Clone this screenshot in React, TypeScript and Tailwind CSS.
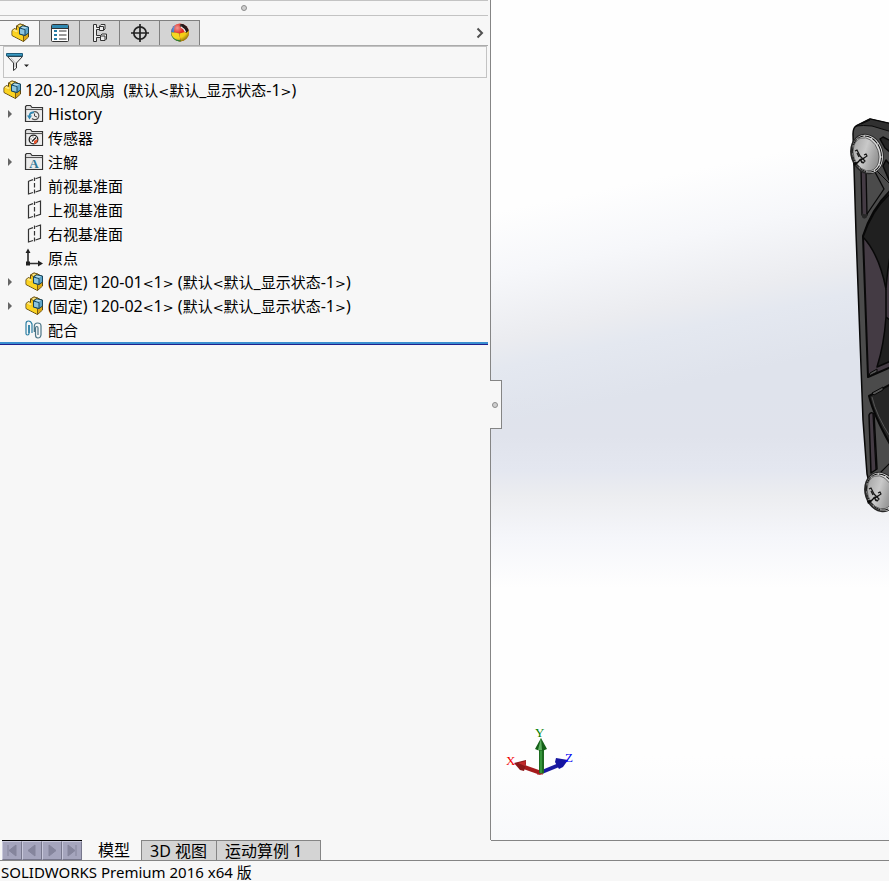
import { Fragment, type ReactNode } from "react";

const RUNS = /([\u3000-\u9fff]+|[<>])/;
const CJK = /[\u3000-\u9fff]/;

/** Sets Latin runs one pixel larger than the Chinese ones, with wide angle brackets. */
function TreeText({ children }: { children: string }) {
  return (
    <span className="whitespace-pre text-[16px]">
      {children.split(RUNS).map((part, i) => {
        if (CJK.test(part)) {
          return <span key={i} className="text-[15px]">{part}</span>;
        }
        if (part === "<" || part === ">") {
          return <span key={i} className="font-['DejaVu_Sans',sans-serif] text-[13px]">{part}</span>;
        }
        return <Fragment key={i}>{part}</Fragment>;
      })}
    </span>
  );
}

function Svg({ w = 20, h = 20, children }: { w?: number; h?: number; children: ReactNode }) {
  return (
    <svg width={w} height={h} viewBox={`0 0 ${w} ${h}`} fill="none" className="block shrink-0" aria-hidden="true">
      {children}
    </svg>
  );
}

function PartIcon() {
  return (
    <Svg>
      <path d="M2 7.500 4.500 5.500 6.500 6.500V3L10 1 13.500 2 18.500 4.500V14L13.500 18.500 2 12.500Z" fill="#f5c518" stroke="#5c460e" strokeLinejoin="round" />
      <path d="M6.500 3 10 1 13.500 2 9.500 4.500Z" fill="#fce680" stroke="#6b500f" strokeWidth=".8" />
      <path d="M2.500 7.500 4.500 6 8 8 6.500 9.500Z" fill="#fce680" />
      <path d="m2.500 8 11 5.500V18L2.500 12.200Z" fill="#fbd423" />
      <path d="M13.500 13.500V18L18 14V10Z" fill="#dca716" />
      <path d="M13.500 13V18.500" stroke="#7a5d12" />
      <path d="M9.500 5 12.500 3 18.500 4V10L15 12.500 9.500 11Z" fill="#5fa6ca" stroke="#16455e" strokeLinejoin="round" />
      <path d="M9.500 5 15 6.500V12.500L9.500 11Z" fill="#8cc5df" stroke="#16455e" strokeLinejoin="round" />
      <path d="m10.800 4.800 2-1.200 4.400.700-2.200 1.400Z" fill="#b5dcec" />
    </Svg>
  );
}

function PropertyIcon() {
  return (
    <Svg>
      <rect x="1.500" y="1.500" width="17" height="17" rx="1" fill="#fff" stroke="#333" />
      <path d="M2 2h16v3H2z" fill="#2f88b0" />
      <path d="M2 5.500h16" stroke="#333" />
      <path d="M4 7h3v2H4zm0 4h3v2H4zm0 4h3v2H4z" fill="#257ca6" />
      <path d="M9 8h7.500M9 12h7.500M9 16h7.500" stroke="#333" />
    </Svg>
  );
}

function ConfigIcon() {
  return (
    <Svg>
      <path d="M3.500 1.500h3v3h4v2h-4v6h4v2h-4v4h-3Z" fill="#efefef" stroke="#333" />
      <path d="m9.500 3 1.500-1.500h4V6l-1.500 1.500h-4Z" fill="#eee" stroke="#333" />
      <path d="M9.500 3.500h4v4" stroke="#333" />
      <path d="m10.500 12.500 1.500-1.500h4.500V16L15 17.500h-4.500Z" fill="#eee" stroke="#333" />
      <path d="M10.500 13h4.500v4" stroke="#333" />
    </Svg>
  );
}

function TargetIcon() {
  return (
    <Svg>
      <circle cx="10" cy="10" r="6.200" stroke="#222" strokeWidth="1.700" />
      <path d="M10 1v18M1 10h18" stroke="#222" strokeWidth="1.700" />
    </Svg>
  );
}

function AppearanceIcon() {
  return (
    <Svg>
      <defs>
        <clipPath id="ball"><circle cx="10" cy="9.500" r="9" /></clipPath>
        <radialGradient id="shine" cx=".35" cy=".25" r=".8">
          <stop offset="0" stopColor="#fff" stopOpacity=".5" />
          <stop offset=".4" stopColor="#fff" stopOpacity="0" />
          <stop offset=".7" stopColor="#000" stopOpacity="0" />
          <stop offset="1" stopColor="#000" stopOpacity=".45" />
        </radialGradient>
      </defs>
      <g clipPath="url(#ball)">
        <path d="M0 0h20v20H0z" fill="#e22e26" />
        <path d="M0 0h5.500Q4 5 4 9.500H0z" fill="#3c78c8" />
        <path d="M0 9.500q5-.500 9 1l2 10H0z" fill="#35a04a" />
        <path d="M1 9.500q4-.500 8 1l2 9q-8-2-10-10Z" fill="#f6d723" />
        <path d="M1 12q4 6 10 5v3H0Z" fill="#35a04a" />
        <path d="M9.500 10.500Q15 10 19 7v13h-8z" fill="#f4cd16" />
        <path d="M10.500 1h6l3 6-3.500 3q-2.500-5-6.500-7Z" fill="#241a1a" />
        <path d="M11 4q3 1.500 4.500 5" stroke="#f3eaea" strokeWidth="1.300" />
      </g>
      <circle cx="10" cy="9.500" r="9" fill="url(#shine)" />
    </Svg>
  );
}

function FilterIcon() {
  return (
    <svg width="24" height="20" viewBox="0 0 24 20" fill="none" aria-hidden="true">
      <path d="M1.500 4.500 7.500 11v7.500l3-2.500v-5l6-6.500Z" fill="#eee" stroke="#333" />
      <path d="m5 6 4 4.500V15" stroke="#bbb" />
      <path d="M.500 1.500h16v2.500H.500Z" fill="#3a9bc4" stroke="#205d7b" />
      <path d="M18 12.500h5L20.500 15Z" fill="#222" />
    </svg>
  );
}

function Folder({ children }: { children: ReactNode }) {
  return (
    <Svg>
      <path d="M1.500 17.500v-15l1-1h4l1.500 2h10.500v14Z" fill="#dedede" stroke="#333" strokeWidth="1.200" />
      <path d="M2 5.500h16.500" stroke="#555" />
      <path d="M3 6.500h15v10H3Z" fill="#ececec" />
      {children}
    </Svg>
  );
}

function HistoryIcon() {
  return (
    <Folder>
      <path d="M7.500 9.500A4 4 0 1 1 8 14.500" stroke="#555" strokeWidth="1.200" />
      <path d="M10.500 9.500V12l2.500 1" stroke="#444" />
      <path d="M10 8.500Q6 8 5.500 12" stroke="#3087b2" strokeWidth="1.800" />
      <path d="M3 11.500h5l-2.500 4Z" fill="#3087b2" />
    </Folder>
  );
}

function SensorIcon() {
  return (
    <Folder>
      <circle cx="9.500" cy="11.500" r="4.300" fill="#fff" stroke="#222" strokeWidth="1.300" />
      <path d="m10 13 3.500-2A4 4 0 0 1 10 16Z" fill="#e8542c" />
      <path d="m8 13.500 4-4" stroke="#222" strokeWidth="1.500" />
      <path d="M6.500 11h1M9 8.500v1" stroke="#222" />
    </Folder>
  );
}

function AnnotationIcon() {
  return (
    <Folder>
      <text x="10" y="16" textAnchor="middle" className="fill-[#2f7797] font-['Liberation_Serif',serif] text-[13px] font-bold">A</text>
    </Folder>
  );
}

function PlaneIcon() {
  return (
    <Svg>
      <path d="M4.500 5v13L9 16.500M4.500 5.200 9 3.600M11.500 2.700l5-1.700V14.300L11.500 16" stroke="#333" strokeWidth="1.200" />
      <path d="M10.500 1.500V5m0 2v4.500m0 2V17.500" stroke="#333" strokeWidth="1.200" />
    </Svg>
  );
}

function OriginIcon() {
  return (
    <Svg>
      <path d="M4 3v12.500h11" stroke="#333" strokeWidth="1.700" />
      <path d="M1.500 5 4 .500 6.500 5ZM14 12.500l5 3-5 3Z" fill="#222" />
      <path d="M2 13.500h4v4H2z" fill="#222" />
    </Svg>
  );
}

function MatesIcon() {
  return (
    <Svg>
      <path d="M5 5v8.500q0 1.500-1.500 1.500T2 13.500V4Q2 1 4.500 1T8 4v9" stroke="#2b7ea3" strokeWidth="1.200" />
      <path d="M5 13V5" stroke="#2b7ea3" strokeWidth="1.500" />
      <path d="M14 15V8q0-1.500-1.200-1.500T11.500 8v7q0 3 2.500 3t3-3V6q0-3-3.500-3-3 0-3.200 3v6" stroke="#4c7688" strokeWidth="1.200" />
    </Svg>
  );
}

type Item = { label: string; icon: () => ReactNode; expandable?: boolean };

const items: Item[] = [
  { label: "History", icon: HistoryIcon, expandable: true },
  { label: "传感器", icon: SensorIcon },
  { label: "注解", icon: AnnotationIcon, expandable: true },
  { label: "前视基准面", icon: PlaneIcon },
  { label: "上视基准面", icon: PlaneIcon },
  { label: "右视基准面", icon: PlaneIcon },
  { label: "原点", icon: OriginIcon },
  { label: "(固定) 120-01<1> (默认<默认_显示状态-1>)", icon: PartIcon, expandable: true },
  { label: "(固定) 120-02<1> (默认<默认_显示状态-1>)", icon: PartIcon, expandable: true },
  { label: "配合", icon: MatesIcon },
];

const panelTabs = [
  { name: "FeatureManager", icon: PartIcon },
  { name: "PropertyManager", icon: PropertyIcon },
  { name: "ConfigurationManager", icon: ConfigIcon },
  { name: "DimXpertManager", icon: TargetIcon },
  { name: "DisplayManager", icon: AppearanceIcon },
];

function Grip() {
  return <span className="block size-1.5 rounded-full border border-[#8d8d8d] bg-[#cfcfcf]" />;
}

function Sidebar() {
  return (
    <aside className="flex w-[491px] shrink-0 flex-col border-r border-[#858585] pr-0.5">
      <div className="flex h-4 items-center justify-center border-y border-[#c3c3c3]">
        <Grip />
      </div>
      <div className="mt-1 flex h-[26px] border-b border-[#ababab]">
        <div role="tablist" className="flex">
          {panelTabs.map(({ name, icon: Icon }, i) => (
            <button
              key={name}
              type="button"
              role="tab"
              aria-label={name}
              aria-selected={i === 0}
              className={
                i === 0
                  ? "flex w-10 items-center justify-center border-t border-r border-[#808080] bg-[#f7f7f7]"
                  : "flex w-10 items-center justify-center border-t border-r border-[#808080] bg-[#d4d4d4]"
              }
            >
              <Icon />
            </button>
          ))}
        </div>
        <button type="button" aria-label="展开" className="ml-auto flex w-4 items-center justify-center">
          <svg width="8" height="12" viewBox="0 0 8 12" fill="none">
            <path d="m1.500 1.500 4.500 4.500-4.500 4.500" stroke="#505050" strokeWidth="2" />
          </svg>
        </button>
      </div>
      <div className="mr-px ml-[3px] flex h-8 items-center border border-[#c3c3c3] pl-0.5">
        <button type="button" aria-label="过滤器"><FilterIcon /></button>
      </div>
      <ul role="tree" className="border-b-2 border-[#3a8fd0]">
        <li role="treeitem" className="flex h-6 items-center gap-[3px] pl-0.5">
          <PartIcon />
          <TreeText>{"120-120风扇  (默认<默认_显示状态-1>)"}</TreeText>
        </li>
        {items.map(({ label, icon: Icon, expandable }) => (
          <li key={label} role="treeitem" className="flex h-6 items-center">
            <span className="flex w-6 shrink-0 pl-2">
              {expandable && (
                <svg width="4" height="8" viewBox="0 0 4 8"><path d="M0 0v8l4-4Z" fill="#666" /></svg>
              )}
            </span>
            <span className="mr-1"><Icon /></span>
            <TreeText>{label}</TreeText>
          </li>
        ))}
      </ul>
      <div className="h-px bg-[#20208c]" />
    </aside>
  );
}

function Screw({ x, y }: { x: number; y: number }) {
  return (
    <g transform={`translate(${x} ${y})`}>
      <g transform="rotate(-18)">
        <ellipse rx="16.500" ry="20.500" fill="#262626" />
        <ellipse cx=".500" rx="15" ry="19.500" fill="#dadada" />
        <ellipse cx="0" rx="14" ry="18.500" stroke="#111" strokeDasharray="7 1" fill="none" />
        <ellipse cx="-1" rx="12.500" ry="17" fill="url(#steel)" stroke="#444" strokeWidth=".7" />
      </g>
      <path d="m-14 9 4-1 3-3 5-2-1 2-4 2-3 3-3 2Z" fill="#0a0a0a" />
      <path d="m-12-3 2-1 3 6 5 5-2 2-3-4M-10-1l2 4m1 2 2 4M-3 1l2-1 1 2-3 2" stroke="#161616" strokeWidth="1.200" fill="none" />
    </g>
  );
}

function FanModel() {
  return (
    <svg
      width="44"
      height="410"
      viewBox="845 110 44 410"
      className="absolute top-[110px] right-0"
      role="img"
      aria-label="120-120风扇"
      strokeLinejoin="round"
    >
      <defs>
        <linearGradient id="steel" x1="0" y1="0" x2="1" y2="1">
          <stop offset="0" stopColor="#9b9b9b" />
          <stop offset=".45" stopColor="#c9c9c9" />
          <stop offset=".7" stopColor="#a3a3a3" />
          <stop offset="1" stopColor="#7d7d7d" />
        </linearGradient>
      </defs>
      <path d="M853 134q0-6 3-8l14-7 22 5v362h-22l-3-12-4-54-7-187Z" fill="#4b4b4b" stroke="#080808" strokeWidth="1.500" />
      <path d="m856 126 14-7 22 5v8l-20-6q-9-1-16 0Z" fill="#303030" stroke="#080808" />
      <path d="m861 124 9-4" stroke="#080808" />
      <path d="m880 139 3-2 8 4v12l-6-5Zm3 27 3-6 6 7v13h-3Z" fill="#252525" stroke="#080808" strokeWidth="1.500" />
      <path d="m861 168 1 47q3 5 5 0l-1-45Z" fill="#443b44" stroke="#080808" strokeWidth="1.300" />
      <path d="M862 213q2 2 5 1v3q-3 3-5 0Z" fill="#272727" />
      <path d="m875 172 9 17-17 25" fill="none" stroke="#080808" strokeWidth="1.300" />
      <path d="m877 171 12 12" stroke="#080808" />
      <path d="M863 236q9-28 28-46v177l-23 10Z" fill="#443b44" stroke="#080808" strokeWidth="2" />
      <path d="M863 237q10-29 28-44v60q-3 10-5 36-7-35-23-52Z" fill="#202020" stroke="#080808" strokeWidth="1.500" />
      <path d="M886 289v28M886 317q-2 28-9 50l14-6v-40Z" fill="#202020" stroke="#080808" strokeWidth="1.500" />
      <path d="m870 373 7-4v3l-8 4Z" fill="#555" stroke="#080808" />
      <path d="m869 396 22-12v62Q874 416 869 396Z" fill="#262626" stroke="#080808" strokeWidth="2" />
      <path d="m872 393 11-6v3l-9 5Z" fill="#555" stroke="#080808" />
      <path d="M872 397q4 18 19 41" fill="none" stroke="#555" />
      <path d="M869 415q2-4 5-1l3 55-6 4Z" fill="#443b44" stroke="#080808" strokeWidth="1.500" />
      <path d="m873 414 3 56M880 473l10-10" stroke="#080808" strokeWidth="1.200" />
      <Screw x={867} y={154} />
      <Screw x={881} y={492} />
    </svg>
  );
}

function Triad() {
  return (
    <svg
      width="70"
      height="52"
      viewBox="505 726 70 52"
      className="absolute bottom-[62px] left-[14px] font-['Liberation_Serif',serif] text-[13px]"
      role="img"
      aria-label="XYZ"
    >
      <path d="m541 773-17-6" stroke="#a51a1c" strokeWidth="4" />
      <path d="m514 763 12-3v4l-2 7-4-1Z" fill="#8c1719" />
      <path d="m518 763 8-2-1 5Z" fill="#c22a2c" />
      <path d="m542 772 17-7" stroke="#1b1ba0" strokeWidth="4" />
      <path d="m568 760-12-2-1 4 4 7 4-2Z" fill="#1515a0" />
      <path d="m539 749h5v24q-3 2-5 0Z" fill="#1d6b20" />
      <path d="M540 749h2v24h-2Z" fill="#35953a" />
      <path d="m541 738-6 11q6 3 12 0Z" fill="#146018" />
      <path d="m541 738-3 12h4Z" fill="#5eb261" />
      <path d="m537 774h6" stroke="#b22224" />
      <text x="506" y="765" className="fill-[#f00000]">X</text>
      <text x="535" y="737" className="fill-[#008000]">Y</text>
      <text x="565" y="762" className="fill-[#0000f0]">Z</text>
    </svg>
  );
}

function Viewport() {
  return (
    <main className="relative -mb-px min-w-0 flex-1 overflow-hidden border-b border-[#858585] bg-[linear-gradient(180deg,transparent_0%,transparent_47%,#e0e3ec_52%,#e4e7f0_56%,#ecedf0_59%,#f5f6fa_64%,#fefefe_70%,#fefefe_90%,#f8f9fb_100%),linear-gradient(168deg,#fefefe_0%,#fefefe_23%,#f6f7fa_30%,#ebecf0_37%,#e4e8f0_40%,#dfe3ec_46%,#dfe3ec_100%)]">
      <FanModel />
      <Triad />
    </main>
  );
}

const navPaths = [
  "M4 2v11M12 2v11L5 7.500Z",
  "M11 2v11L4 7.500Z",
  "M5 2v11l7-5.500Z",
  "M4 2v11l7-5.500ZM12 2v11",
];
const navNames = ["第一个", "上一个", "下一个", "最后一个"];

function BottomTabs() {
  return (
    <div className="flex h-[21px] border-b border-[#858585] pl-0.5">
      <div className="flex border-t border-black">
        {navPaths.map((d, i) => (
          <button
            key={d}
            type="button"
            aria-label={navNames[i]}
            className="flex w-5 items-center justify-center border border-t-[#c9c9dc] border-r-[#77778c] border-b-[#77778c] border-l-[#c9c9dc] bg-[#a5a5bd]"
          >
            <svg width="16" height="15" viewBox="0 0 16 15">
              <path d={d} fill="#85859c" stroke="#85859c" />
            </svg>
          </button>
        ))}
      </div>
      <div role="tablist" className="flex text-[16px] leading-5 whitespace-nowrap">
        <button type="button" role="tab" aria-selected="true" className="w-[59px] pl-4 text-left">模型</button>
        <button type="button" role="tab" aria-selected="false" className="w-[75px] border-t border-l border-[#858585] bg-[#d4d4d4] pl-2 text-left">3D 视图</button>
        <button type="button" role="tab" aria-selected="false" className="w-[105px] border-x border-t border-[#858585] bg-[#d4d4d4] pl-2 text-left">运动算例 1</button>
      </div>
    </div>
  );
}

export default function App() {
  return (
    <div className="flex h-screen flex-col overflow-hidden bg-[#f7f7f7] font-['Noto_Sans','Noto_Sans_CJK_SC',sans-serif] text-black">
      <div className="relative flex min-h-0 flex-1">
        <Sidebar />
        <Viewport />
        <button
          type="button"
          aria-label="折叠面板"
          className="absolute top-[380px] left-[490px] flex h-[49px] w-3 items-center border-y border-r border-[#858585] bg-[#f7f7f7] pl-0.5"
        >
          <Grip />
        </button>
      </div>
      <BottomTabs />
      <footer className="h-5 pl-px text-[15px] leading-[22px] whitespace-nowrap">SOLIDWORKS Premium 2016 x64 版</footer>
    </div>
  );
}
